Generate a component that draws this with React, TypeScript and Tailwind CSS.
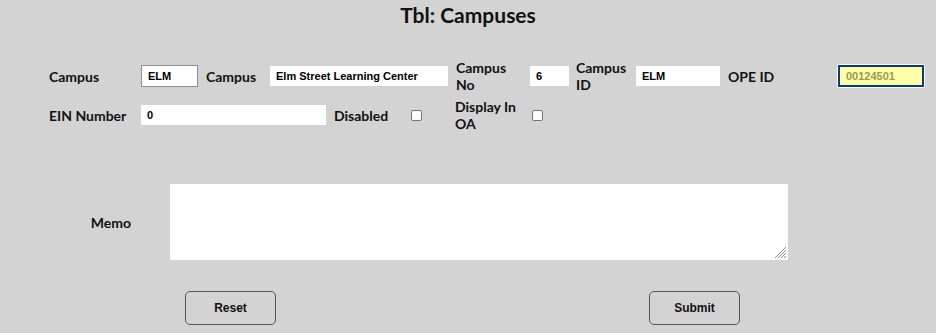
import React from 'react';

const labelFont = { fontFamily: '"Century Gothic", Lato, "DejaVu Sans", sans-serif' };

function Label({ children, className = '' }: { children: React.ReactNode; className?: string }) {
  return (
    <div
      className={`shrink-0 whitespace-nowrap text-[14px] font-bold leading-[17px] text-[#111] ${className}`}
      style={labelFont}
    >
      {children}
    </div>
  );
}

function Field({ value, className = '' }: { value: string; className?: string }) {
  return (
    <div
      className={`flex h-[20px] shrink-0 items-center bg-white px-[6px] font-['Liberation_Sans',Arial,sans-serif] text-[11px] font-bold text-black ${className}`}
    >
      {value}
    </div>
  );
}

function Check() {
  return <span className="block h-[11px] w-[11px] shrink-0 rounded-[2px] border border-[#767676] bg-white" />;
}

export default function App() {
  return (
    <div className="min-h-[333px] w-full bg-[#d3d3d3] font-['Liberation_Sans',Arial,sans-serif]">
      <h1
        className="pt-[3px] text-center text-[21px] font-bold leading-[24px] text-[#111]"
        style={labelFont}
      >
        Tbl: Campuses
      </h1>

      <div className="mt-[32px] flex h-[34px] items-center pl-[49px]">
        <Label className="w-[92px]">Campus</Label>
        <Field value="ELM" className="h-[22px] w-[57px] border border-[#8f8f99]" />
        <Label className="w-[72px] pl-[8px]">Campus</Label>
        <Field value="Elm Street Learning Center" className="w-[178px]" />
        <Label className="w-[82px] pl-[8px]">
          Campus
          <br />
          No
        </Label>
        <Field value="6" className="w-[39px]" />
        <Label className="w-[67px] pl-[7px]">
          Campus
          <br />
          ID
        </Label>
        <Field value="ELM" className="w-[84px]" />
        <Label className="w-[117px] pl-[8px]">OPE ID</Label>
        <div className="shrink-0 rounded-[2px] border border-white">
          <div className="flex h-[22px] w-[86px] items-center border-2 border-[#0f3a7a] bg-[#ffffaa] px-[6px] text-[11px] font-bold text-[#9a9a52]">
            00124501
          </div>
        </div>
      </div>

      <div className="mt-[5px] flex h-[34px] items-center pl-[49px]">
        <Label className="w-[92px]">EIN Number</Label>
        <Field value="0" className="w-[185px]" />
        <Label className="w-[85px] pl-[8px]">Disabled</Label>
        <Check />
        <Label className="w-[110px] pl-[33px]">
          Display In
          <br />
          OA
        </Label>
        <Check />
      </div>

      <div className="mt-[52px] flex items-center">
        <Label className="w-[131px] text-right">Memo</Label>
        <div className="relative ml-[39px] h-[76px] w-[618px] shrink-0 bg-white">
          <textarea className="h-full w-full resize-none bg-white outline-none" />
          <svg className="absolute right-[1px] bottom-[1px]" width="13" height="13" viewBox="0 0 13 13">
            <g stroke="#888" strokeWidth="1">
              <line x1="12" y1="1" x2="1" y2="12" />
              <line x1="12" y1="4" x2="4" y2="12" />
              <line x1="12" y1="7" x2="7" y2="12" />
              <line x1="12" y1="10" x2="10" y2="12" />
            </g>
          </svg>
        </div>
      </div>

      <div className="mt-[31px] flex gap-[373px] pl-[185px]">
        <button className="h-[34px] w-[91px] shrink-0 rounded-[5px] border border-[#555] text-[12px] font-bold text-[#111]">
          Reset
        </button>
        <button className="h-[34px] w-[91px] shrink-0 rounded-[5px] border border-[#555] text-[12px] font-bold text-[#111]">
          Submit
        </button>
      </div>
    </div>
  );
}
